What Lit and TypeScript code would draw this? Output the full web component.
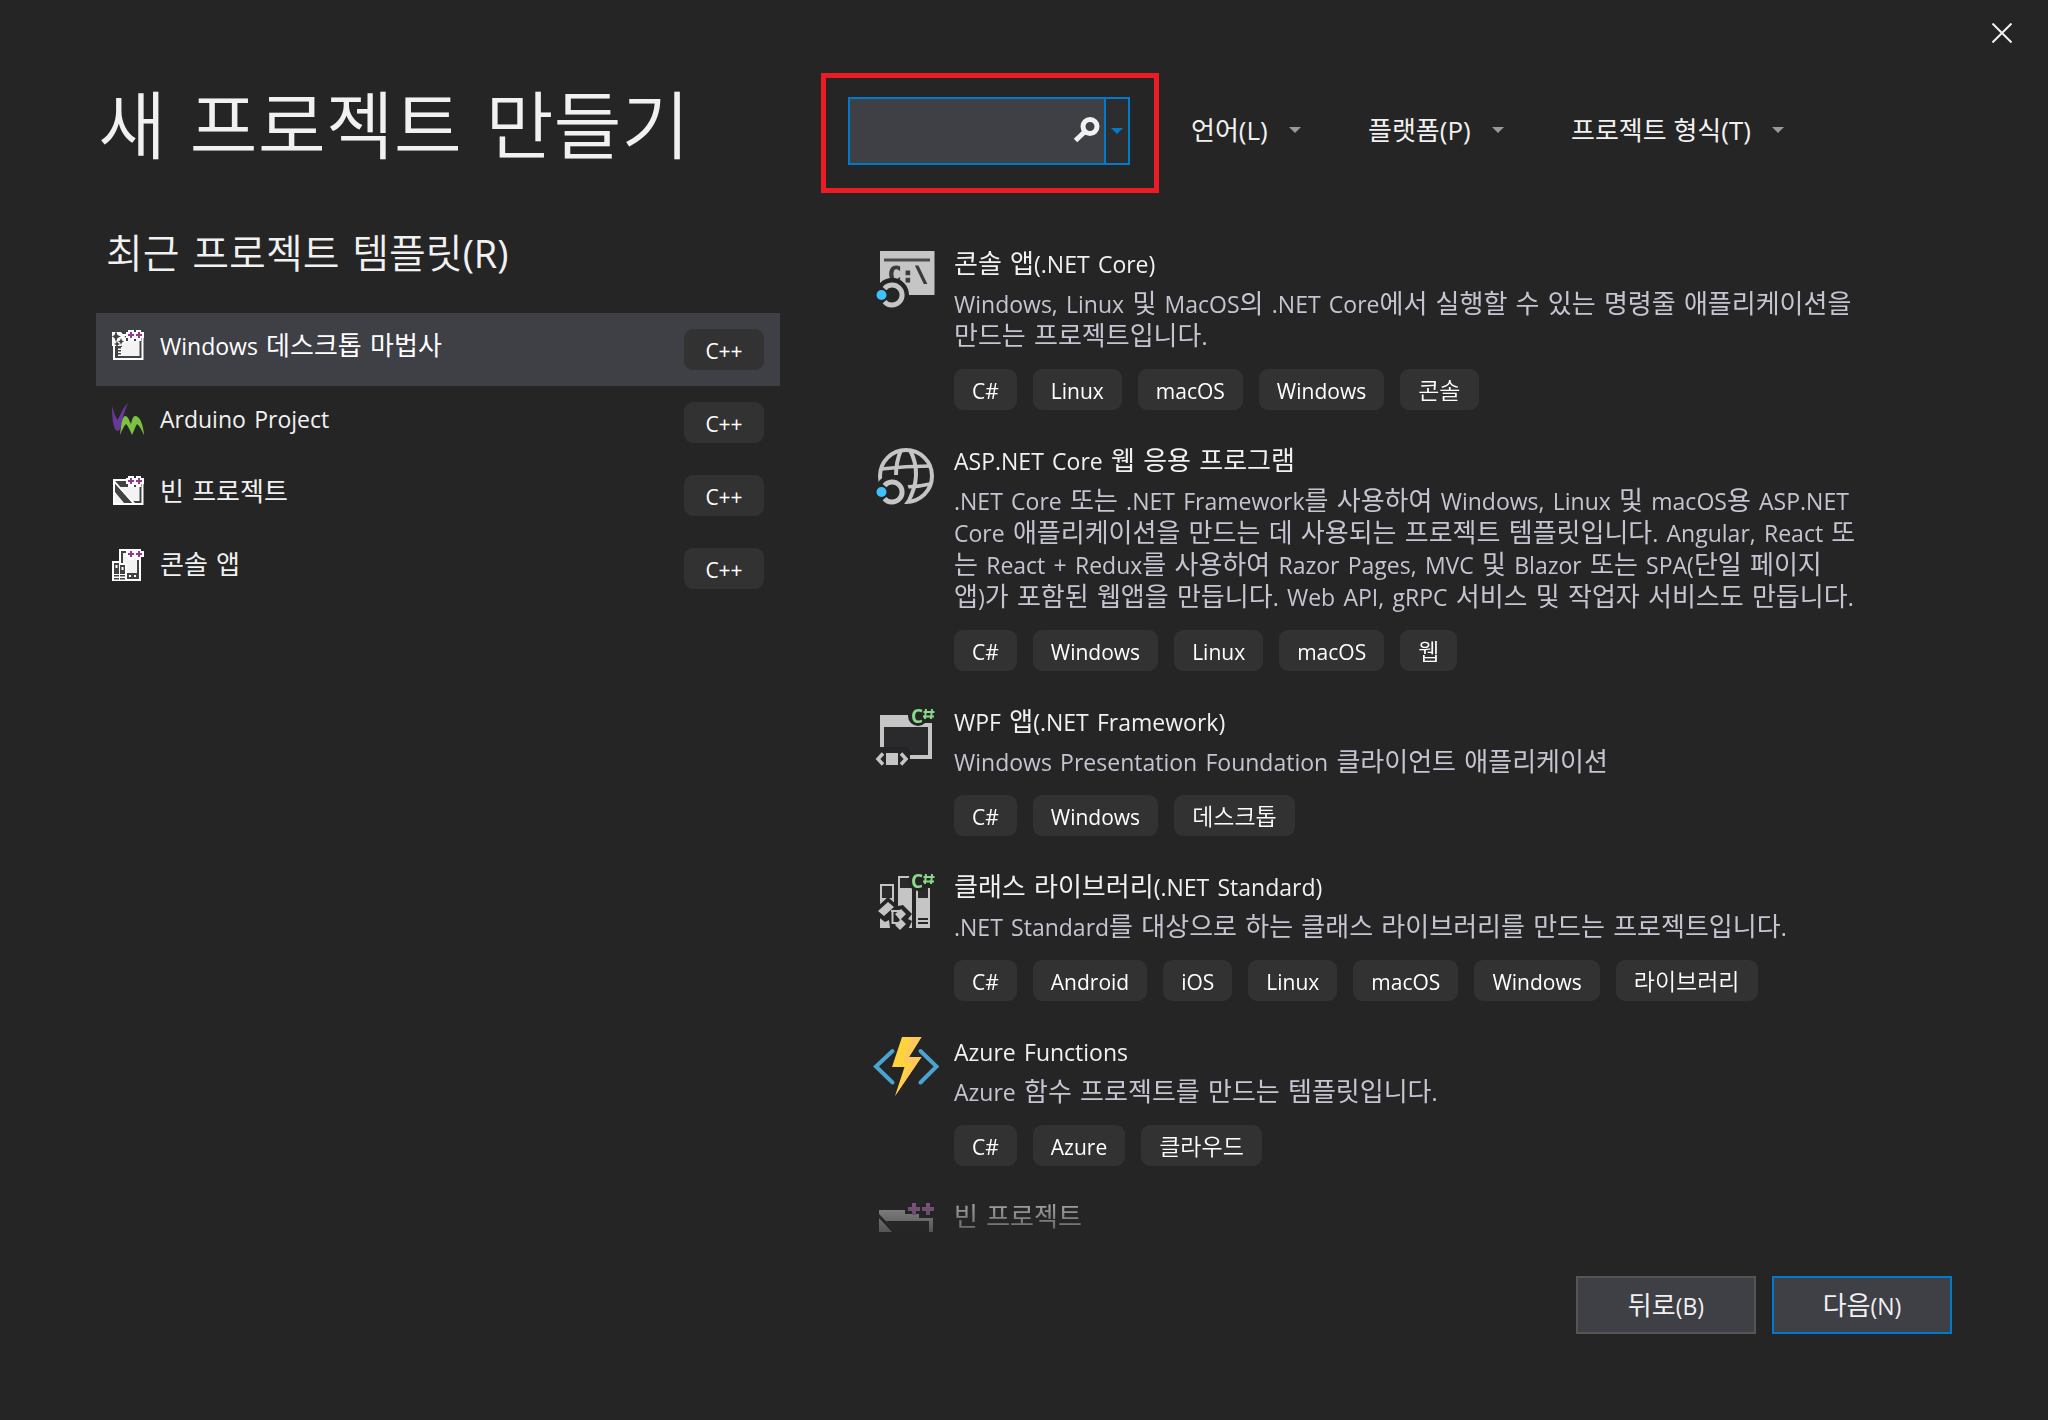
import { LitElement, html, css, svg, type TemplateResult, type SVGTemplateResult } from "lit";
import { customElement, property } from "lit/decorators.js";

type Art = SVGTemplateResult;

interface RecentTemplate {
  name: string;
  tag: string;
  icon: Art;
  selected?: boolean;
}

interface ProjectTemplate {
  name: string;
  description?: string;
  tags?: string[];
  icon: Art;
}

/* Latin runs are set a little smaller than the Hangul around them. */
const mixed = (text: string): (string | TemplateResult)[] =>
  text
    .split(/([!-~]+)/)
    .filter((run) => run !== "")
    .map((run) => (/^[!-~]/.test(run) ? html`<span class="latin">${run}</span>` : run));

const BG = "#252525";
const GREY = "#c5c5c5";

/* ---- 32px icons of the recent list ---- */

const smallPluses = svg`
  <path d="M16 1h6v2h2v-2h5v2h3v6h-3v3h-5v-2h-2v2h-6v-3h-2v-6h2z" fill="#fff"/>
  <path d="M19 3v6M16 6h6M27 3v6M24 6h6" stroke="#93388f" stroke-width="2"/>`;

const wizardIcon = svg`
  <path d="M1 5h30.500v26h-30.500z" fill="#fff"/>
  <path d="M3 7h26.500v22h-26.500z" fill="#424242"/>
  <path d="M10 12h17.500v15h-17.500z" fill="#f3f3f3"/>
  <path d="M0 3h9l5 6v4l-5 4h-9z" fill="#fff"/>
  <path d="M4 2l1.500 4 3.500 1.500-3.500 1.500-1.500 4-1.500-4-2.500-1.500 2.500-1.500zM9 9l1 2.500 2 1-2 1-1 2.500-1-2.500-2-1 2-1zM5 12l1 2 2 1-2 1-1 2-1-2-2-1 2-1z" fill="#424242"/>
  <path d="M6 18h4v9h-4z" fill="#fff"/>
  <path d="M6 18h3v1.500h-3zM6 21h3v1.500h-3zM6 24h3v1.500h-3z" fill="#424242"/>
  ${smallPluses}`;

const visualMicroIcon = svg`
  <path d="M0 4c2 6 3 10 5.500 14 2.500-4 5-12 10.500-17-3 7-5 13-6 20-1 5-2.500 8-4.500 8-3.500 0-5.500-10-5.500-25z" fill="#66389a"/>
  <path d="M8 33c1-9 2-18 5-19 3 0 4 4 6 8 1-4 2-8 4-8 5 0 8 8 9 19-2-4-4-9-7-11-2 3-3 7-5 11-2-5-4-9-6-11-2 2-4 6-6 11z" fill="#7cc242"/>`;

const smallEmptyIcon = svg`
  <path d="M1 4h30.500v26h-30.500z" fill="#fff"/>
  <path d="M3 6h26.500v22h-26.500z" fill="#424242"/>
  <path d="M8 12h19.500v14h-7z" fill="#f3f3f3"/>
  <path d="M3 17l9 11h-9z" fill="#f3f3f3"/>
  <path d="M3 6l20 22h-3l-17-19z" fill="#fff"/>
  <path d="M3 9l17 19h-5l-12-14z" fill="#424242"/>
  ${smallPluses}`;

const smallConsoleIcon = svg`
  <path d="M7 1h22v32h-29v-20h7z" fill="#fff"/>
  <path d="M9 3h6v2h-4v10h-2zM25 10h2v15h-2zM15 25h12v6h-12z" fill="#424242"/>
  <path d="M11 5h14v20h-10v-9h-4z" fill="#f3f3f3"/>
  <path d="M17 27h2v2h-2zM22 27h2v2h-2z" fill="#fff"/>
  <path d="M2 15h5v11h-5zM2 27h5v1.500h-5zM2 30h5v1.500h-5zM8 17h5v9h-5zM8 27h5v1.500h-5zM8 30h5v1.500h-5z" fill="#424242"/>
  <path d="M3.500 17h2v3h-2zM9.500 19h2v3h-2z" fill="#fff"/>
  ${smallPluses}`;

/* ---- 64px icons of the template list ---- */

const coreBadge = svg`
  <circle cx="20" cy="47" r="17" fill="${BG}"/>
  <path d="M12.500 40.500a10 10 0 1 1 0 13" fill="none" stroke="${GREY}" stroke-width="5"/>
  <circle cx="9.500" cy="47" r="5" fill="#3fc1ff"/>`;

const languageBadge = svg`
  <circle cx="46" cy="10" r="10" fill="${BG}"/>
  <text x="39" y="17" class="badge-c">C</text>
  <path d="M54 3l-1 10M60 3l-1 10M51.500 6h11M51 10.500h11" stroke="#8bd88b" stroke-width="2" fill="none"/>`;

const consoleCoreIcon = svg`
  <path d="M8 3h54.500v44h-54.500z" fill="${GREY}"/>
  <path d="M12 10.500h46v3h-46z" fill="#4a4a4a"/>
  <text x="16" y="34" class="prompt">C:\\</text>
  ${coreBadge}`;

const webCoreIcon = svg`
  <g fill="none" stroke="${GREY}" stroke-width="4">
    <circle cx="34" cy="31" r="26"/>
    <path d="M9 24q25-3 50-3M34 42q12 0 24-3" stroke-width="3.500"/>
    <path d="M29 5q-5 12-5 25M38 5q13 25-2 52"/>
  </g>
  ${coreBadge}`;

const wpfIcon = svg`
  <path d="M12 21h44v28h-44z" fill="#2a2a2c"/>
  <path d="M8 9h52v44h-22v-4h18v-28h-44v22h-4z" fill="${GREY}"/>
  <path d="M5 41h31l4 6v14h-38v-14z" fill="${BG}"/>
  <path d="M38 49h6v4h-6zM14 47h12v12h-12z" fill="${GREY}"/>
  <path d="M11 47.500l-5 5.500 5 5.500M29 47.500l5 5.500-5 5.500" fill="none" stroke="${GREY}" stroke-width="3.500"/>
  <path d="M36 9h24v10h-20z" fill="${BG}"/>
  <path d="M36 13h24v8h-24z" fill="${GREY}"/>
  <path d="M51 13h9v4h-9z" fill="${BG}"/>
  ${languageBadge}`;

const libraryIcon = svg`
  <path d="M8 13h14v44h-14zM26 5h14v52h-14zM44 17h14v40h-14z" fill="${GREY}"/>
  <path d="M10 15h10v12h-10zM28 7h12v10h-12zM46 17h10v10h-10z" fill="#2a2a2c"/>
  <path d="M46 47h10v2h-10zM46 51h10v2h-10z" fill="${BG}"/>
  <path d="M5 36l11-10 10 9 5-1 9 9-4 5 4 2-3 7h-19l-1-8-4 2-8-6z" fill="${BG}"/>
  <path d="M8 51h3l2 2h3v4h-8zM38 55l2-2v4h-3z" fill="${GREY}"/>
  <path d="M6 40l10-9 6 5-10 9zM23 43l6-5 5 5-6 6zM23 54l6-6 5 5-6 6z" fill="${GREY}"/>
  <path d="M19 40h9M20.500 41v11h6" fill="none" stroke="${GREY}" stroke-width="2"/>
  ${languageBadge}`;

const functionsIcon = svg`
  <path d="M20.500 15l-16.500 15.500 16.500 16M48.500 15l16 15.500-16 16" fill="none" stroke="#4ba3cf" stroke-width="4" stroke-linecap="round"/>
  <path d="M30 1h19.500l-12.500 20h12.500l-26.500 39 9.500-29h-12.500z" fill="#ffd33c"/>
  <path d="M39 1h10.500l-12.500 20h12.500l-26.500 39 17-33h-9z" fill="#ffc85a"/>`;

const emptyIcon = svg`
  <path d="M7 9h26v4h14v4h14v46h-54z" fill="${GREY}"/>
  <path d="M14 20h43v39h-8z" fill="#2a2a2c"/>
  <path d="M7 13l48 50h-5l-43-46z" fill="${BG}"/>
  <path d="M40 2h4v4h4v4h-4v4h-4v-4h-4v-4h4zM54 2h4v4h4v4h-4v4h-4v-4h-4v-4h4z" fill="#b470b4"/>`;

const RECENT: RecentTemplate[] = [
  { name: "Windows 데스크톱 마법사", tag: "C++", icon: wizardIcon, selected: true },
  { name: "Arduino Project", tag: "C++", icon: visualMicroIcon },
  { name: "빈 프로젝트", tag: "C++", icon: smallEmptyIcon },
  { name: "콘솔 앱", tag: "C++", icon: smallConsoleIcon },
];

const TEMPLATES: ProjectTemplate[] = [
  {
    name: "콘솔 앱(.NET Core)",
    description:
      "Windows, Linux 및 MacOS의 .NET Core에서 실행할 수 있는 명령줄 애플리케이션을 만드는 프로젝트입니다.",
    tags: ["C#", "Linux", "macOS", "Windows", "콘솔"],
    icon: consoleCoreIcon,
  },
  {
    name: "ASP.NET Core 웹 응용 프로그램",
    description:
      ".NET Core 또는 .NET Framework를 사용하여 Windows, Linux 및 macOS용 ASP.NET Core 애플리케이션을 만드는 데 사용되는 프로젝트 템플릿입니다. Angular, React 또는 React + Redux를 사용하여 Razor Pages, MVC 및 Blazor 또는 SPA(단일 페이지 앱)가 포함된 웹앱을 만듭니다. Web API, gRPC 서비스 및 작업자 서비스도 만듭니다.",
    tags: ["C#", "Windows", "Linux", "macOS", "웹"],
    icon: webCoreIcon,
  },
  {
    name: "WPF 앱(.NET Framework)",
    description: "Windows Presentation Foundation 클라이언트 애플리케이션",
    tags: ["C#", "Windows", "데스크톱"],
    icon: wpfIcon,
  },
  {
    name: "클래스 라이브러리(.NET Standard)",
    description: ".NET Standard를 대상으로 하는 클래스 라이브러리를 만드는 프로젝트입니다.",
    tags: ["C#", "Android", "iOS", "Linux", "macOS", "Windows", "라이브러리"],
    icon: libraryIcon,
  },
  {
    name: "Azure Functions",
    description: "Azure 함수 프로젝트를 만드는 템플릿입니다.",
    tags: ["C#", "Azure", "클라우드"],
    icon: functionsIcon,
  },
  { name: "빈 프로젝트", icon: emptyIcon },
];

const FILTERS = ["언어(L)", "플랫폼(P)", "프로젝트 형식(T)"];

const textStyles = css`
  :host {
    --latin: "Open Sans", "Noto Sans", sans-serif;
    --hangul: "DejaVu Sans", "Noto Sans CJK KR", sans-serif;
  }
  .latin {
    font-family: var(--latin);
    font-size: 23px;
    font-weight: 400;
  }
  .tag {
    box-sizing: border-box;
    flex: none;
    height: 41px;
    padding: 0 18px;
    border-radius: 9px;
    background: #323232;
    color: #fff;
    font-size: 23px;
    font-weight: 350;
    line-height: 44px;
  }
  .tag .latin {
    font-size: 21px;
  }
`;

@customElement("recent-item")
export class RecentItem extends LitElement {
  @property({ attribute: false }) item!: RecentTemplate;

  static styles = [
    textStyles,
    css`
      :host {
        display: block;
      }
      .row {
        box-sizing: border-box;
        display: flex;
        align-items: flex-start;
        gap: 16px;
        width: 100%;
        height: 73px;
        padding: 16px 16px 0;
        border: 0;
        background: transparent;
        color: #f1f1f1;
        font-family: var(--hangul);
        font-size: 26px;
        line-height: 34px;
        text-align: left;
      }
      .selected {
        background: #3f3f46;
        color: #fff;
      }
      .icon {
        flex: none;
        width: 32px;
        height: 34px;
      }
      .name {
        flex: 1;
      }
      .row .tag {
        min-width: 80px;
        text-align: center;
      }
    `,
  ];

  render() {
    const { name, tag, icon, selected } = this.item;
    return html`
      <button class="row ${selected ? "selected" : ""}" type="button">
        <svg class="icon" viewBox="0 0 32 34" aria-hidden="true">${icon}</svg>
        <span class="name">${mixed(name)}</span>
        <span class="tag">${mixed(tag)}</span>
      </button>
    `;
  }
}

@customElement("template-item")
export class TemplateItem extends LitElement {
  @property({ attribute: false }) item!: ProjectTemplate;

  static styles = [
    textStyles,
    css`
      :host {
        display: flex;
        gap: 18px;
        font-family: var(--hangul);
        font-size: 26px;
        line-height: 32px;
      }
      .icon {
        flex: none;
        width: 64px;
        height: 64px;
        overflow: visible;
      }
      .badge-c {
        fill: #8bd88b;
        font: 700 19px "Open Sans", sans-serif;
      }
      .prompt {
        fill: #3a3a3a;
        stroke: #3a3a3a;
        stroke-width: 1px;
        font: 700 22px "DejaVu Sans Mono", monospace;
      }
      .body {
        flex: 1;
        min-width: 0;
      }
      .name {
        margin: 0;
        color: #f1f1f1;
        font-size: 26px;
        font-weight: 400;
      }
      .description {
        margin: 8px 0 0;
        color: #c5c5d1;
      }
      .tags {
        display: flex;
        flex-wrap: wrap;
        gap: 16px;
        margin: 17px 0 0;
        padding: 0;
        list-style: none;
      }
    `,
  ];

  render() {
    const { name, description, tags, icon } = this.item;
    return html`
      <svg class="icon" viewBox="0 0 64 64" aria-hidden="true">${icon}</svg>
      <div class="body">
        <h3 class="name">${mixed(name)}</h3>
        ${description ? html`<p class="description">${mixed(description)}</p>` : ""}
        ${tags
          ? html`<ul class="tags">
              ${tags.map((tag) => html`<li class="tag">${mixed(tag)}</li>`)}
            </ul>`
          : ""}
      </div>
    `;
  }
}

@customElement("app-root")
export class AppRoot extends LitElement {
  static styles = [
    textStyles,
    css`
      :host {
        display: block;
      }
      .dialog {
        box-sizing: border-box;
        display: grid;
        grid-template-columns: minmax(0, 684fr) minmax(0, 1131fr);
        grid-template-rows: 73px minmax(0, 1fr) auto;
        column-gap: 41px;
        height: 100vh;
        padding: 0 96px 86px;
        background: #252525;
        color: #f1f1f1;
        font-family: var(--hangul);
        font-size: 26px;
        line-height: 32px;
      }
      .titlebar {
        grid-column: 1 / -1;
        display: flex;
        justify-content: flex-end;
        align-items: flex-start;
        margin-right: -72px;
        padding-top: 11px;
      }
      .close {
        width: 44px;
        height: 44px;
        padding: 12px;
        border: 0;
        background: transparent;
      }
      .close svg {
        display: block;
      }
      .title {
        margin: 0;
        padding: 2px 0 0 2px;
        font-size: 74px;
        font-weight: 350;
        line-height: 104px;
      }
      .subtitle {
        margin: 44px 0 29px;
        padding-left: 10px;
        font-size: 40px;
        font-weight: 350;
        line-height: 60px;
      }
      .subtitle .latin {
        font-size: 38px;
      }
      .recent,
      .templates {
        margin: 0;
        padding: 0;
        list-style: none;
      }
      .main {
        display: flex;
        flex-direction: column;
        gap: 55px;
        min-height: 0;
      }
      .toolbar {
        display: flex;
        align-items: center;
        gap: 32px;
      }
      .callout {
        flex: none;
        padding: 19px 24px 23px 22px;
        border: 5px solid #ed1c24;
      }
      .search {
        display: flex;
        box-sizing: border-box;
        height: 68px;
        width: 282px;
        border: 2px solid #007acc;
        background: #3f3f46;
      }
      .search input {
        flex: 1;
        min-width: 0;
        padding: 0 8px;
        border: 0;
        outline: 0;
        background: transparent;
        color: #f1f1f1;
        font: inherit;
      }
      .search button {
        display: grid;
        place-items: center;
        height: 100%;
        padding: 0;
        border: 0;
        background: transparent;
      }
      .search .go {
        width: 36px;
      }
      .search .history {
        box-sizing: border-box;
        width: 24px;
        border-left: 2px solid #007acc;
        background: #2d2d30;
      }
      .filters {
        display: flex;
        gap: 67px;
        padding-bottom: 6px;
      }
      .filter {
        display: flex;
        align-items: center;
        gap: 21px;
      }
      .filter select {
        appearance: none;
        margin: 0;
        padding: 0;
        border: 0;
        background: transparent;
        color: #f1f1f1;
        font: 26px / 40px "Open Sans", "Noto Sans CJK KR", sans-serif;
      }
      .templates {
        display: flex;
        flex: 1;
        flex-direction: column;
        gap: 35px;
        min-height: 0;
        overflow: hidden;
        padding: 0 93px 0 51px;
        mask-image: linear-gradient(#000 calc(100% - 64px), rgba(0, 0, 0, 0.3) 100%);
      }
      .templates > li {
        flex: none;
      }
      .footer {
        grid-column: 1 / -1;
        display: flex;
        justify-content: flex-end;
        gap: 16px;
        padding-top: 44px;
      }
      .action {
        width: 180px;
        height: 58px;
        padding: 2px 0 0;
        border: 2px solid #555;
        background: #3f3f46;
        color: #f1f1f1;
        font: inherit;
      }
      .primary {
        border-color: #007acc;
      }
    `,
  ];

  render() {
    return html`
      <main class="dialog">
        <div class="titlebar">
          <button class="close" type="button" aria-label="닫기">
            <svg width="20" height="20" viewBox="0 0 20 20" aria-hidden="true">
              <path d="M.5.5l19 19M19.500.5l-19 19" stroke="#f1f1f1" stroke-width="2" />
            </svg>
          </button>
        </div>
        <section>
          <h1 class="title">새 프로젝트 만들기</h1>
          <h2 class="subtitle">${mixed("최근 프로젝트 템플릿(R)")}</h2>
          <ul class="recent">
            ${RECENT.map((item) => html`<li><recent-item .item=${item}></recent-item></li>`)}
          </ul>
        </section>
        <section class="main">
          <div class="toolbar">
            <div class="callout">
              <div class="search" role="search">
                <input type="text" aria-label="템플릿 검색" />
                <button class="go" type="button" aria-label="검색">
                  <svg width="28" height="28" viewBox="0 0 28 28" aria-hidden="true">
                    <circle cx="18" cy="9.500" r="7" fill="none" stroke="#f1f1f1" stroke-width="5" />
                    <path d="M13 14.500l-9.500 9" stroke="#f1f1f1" stroke-width="5" />
                  </svg>
                </button>
                <button class="history" type="button" aria-label="검색 기록">
                  <svg width="12" height="6" viewBox="0 0 12 6" aria-hidden="true">
                    <path d="M0 0h12l-6 6z" fill="#007acc" />
                  </svg>
                </button>
              </div>
            </div>
            <div class="filters">
              ${FILTERS.map(
                (name) => html`<label class="filter">
                  <select aria-label=${name}>
                    <option>${name}</option>
                  </select>
                  <svg width="12" height="6" viewBox="0 0 12 6" aria-hidden="true">
                    <path d="M0 0h12l-6 6z" fill="#999" />
                  </svg>
                </label>`
              )}
            </div>
          </div>
          <ul class="templates">
            ${TEMPLATES.map((item) => html`<li><template-item .item=${item}></template-item></li>`)}
          </ul>
        </section>
        <footer class="footer">
          <button class="action" type="button">${mixed("뒤로(B)")}</button>
          <button class="action primary" type="button">${mixed("다음(N)")}</button>
        </footer>
      </main>
    `;
  }
}
